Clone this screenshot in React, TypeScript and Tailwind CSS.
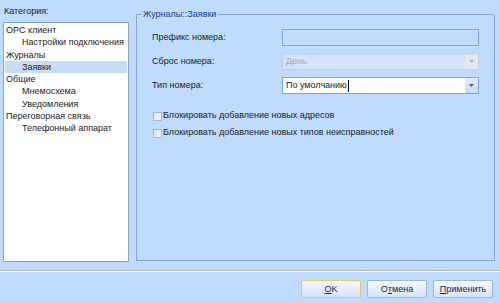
import { ReactNode } from 'react';

const tree = [
  { label: 'OPC клиент', level: 0 },
  { label: 'Настройки подключения', level: 1 },
  { label: 'Журналы', level: 0 },
  { label: 'Заявки', level: 1, selected: true },
  { label: 'Общие', level: 0 },
  { label: 'Мнемосхема', level: 1 },
  { label: 'Уведомления', level: 1 },
  { label: 'Переговорная связь', level: 0 },
  { label: 'Телефонный аппарат', level: 1 },
];

function Arrow({ dim }: { dim?: boolean }) {
  return (
    <svg width="5" height="3" viewBox="0 0 5 3">
      <path d="M0 0h5L2.5 3z" fill={dim ? '#a9b0ba' : '#3b5f92'} />
    </svg>
  );
}

function FieldRow({ label, children }: { label: string; children: ReactNode }) {
  return (
    <div className="flex items-center h-[17px]">
      <div className="w-[130px] shrink-0">{label}</div>
      {children}
    </div>
  );
}

function Button({ children, primary }: { children: ReactNode; primary?: boolean }) {
  return (
    <button
      className={`w-[60px] h-[18px] text-[9px] leading-none text-[#15283f] rounded-[2px] border bg-gradient-to-b from-[#f6f9fd] via-[#e6effa] to-[#d5e3f6] ${
        primary ? 'border-[#e7c66c]' : 'border-[#9eb6d6]'
      }`}
    >
      {children}
    </button>
  );
}

export default function App() {
  return (
    <div className="w-[500px] h-[303px] bg-[#bfdbfe] flex flex-col font-['Liberation_Sans',sans-serif] text-[9px] text-[#1b1b1b] overflow-hidden">
      <div className="flex h-[270px] pl-[3px] pr-[4px]">
        {/* category list */}
        <div className="w-[126px] flex flex-col pt-[6px]">
          <div className="h-[16px] pl-[1px] leading-[10px]">Категория:</div>
          <div className="w-[126px] h-[240px] bg-white border border-[#7fa5d9] p-[1px]">
            {tree.map((item, i) => (
              <div
                key={i}
                className={`h-[12.3px] leading-[12.3px] whitespace-nowrap ${item.level ? 'pl-[17px]' : 'pl-[1px]'} ${
                  item.selected ? 'bg-[#c9dcf6]' : ''
                }`}
              >
                {item.label}
              </div>
            ))}
          </div>
        </div>

        {/* group box */}
        <fieldset className="ml-[7px] mt-[9px] w-[359px] h-[252px] border border-[#7fa5d9] rounded-tr-[3px] px-[15px] min-w-0">
          <legend className="-ml-[11px] px-[2px] text-[#15428b] leading-[11px]">Журналы::Заявки</legend>
          <div className="flex flex-col gap-[7px] pt-[9px]">
            <FieldRow label="Префикс номера:">
              <div className="w-[199px] h-[17px] border border-[#7fa5d9] bg-[#c3dcfc]" />
            </FieldRow>
            <FieldRow label="Сброс номера:">
              <div className="w-[199px] h-[17px] border border-[#c6cdd6] bg-[#d4e4f8] flex items-center">
                <span className="flex-1 pl-[3px] text-[#a3a9b1]">День</span>
                <div className="w-[13px] h-[15px] bg-[#e2e8f0] flex items-center justify-center">
                  <Arrow dim />
                </div>
              </div>
            </FieldRow>
            <FieldRow label="Тип номера:">
              <div className="w-[199px] h-[17px] border border-[#7fa5d9] bg-white flex items-center">
                <span className="flex-1 pl-[3px] flex items-center">
                  По умолчанию
                  <span className="inline-block w-[1px] h-[12px] bg-black ml-[1px]" />
                </span>
                <div className="w-[13px] h-[15px] bg-gradient-to-b from-[#e3edf9] to-[#c7d9f1] flex items-center justify-center">
                  <Arrow />
                </div>
              </div>
            </FieldRow>
          </div>
          <div className="flex flex-col gap-[7px] pt-[17px] pl-[1px]">
            {['Блокировать добавление новых адресов', 'Блокировать добавление новых типов неисправностей'].map((t) => (
              <div key={t} className="flex items-center h-[10px] gap-[1px] whitespace-nowrap">
                <span className="w-[9px] h-[9px] border border-[#aab4c2] bg-gradient-to-br from-[#dfe3e8] to-[#f5f7f9]" />
                {t}
              </div>
            ))}
          </div>
        </fieldset>
      </div>

      {/* bottom bar */}
      <div className="border-t border-[#b6b9ae] h-[1px]" />
      <div className="border-t border-white" />
      <div className="flex justify-end gap-[6px] pr-[7px] pt-[8px]">
        <Button primary>
          <span className="underline">O</span>K
        </Button>
        <Button>
          О<span className="underline">т</span>мена
        </Button>
        <Button>
          <span className="underline">П</span>рименить
        </Button>
      </div>
    </div>
  );
}
